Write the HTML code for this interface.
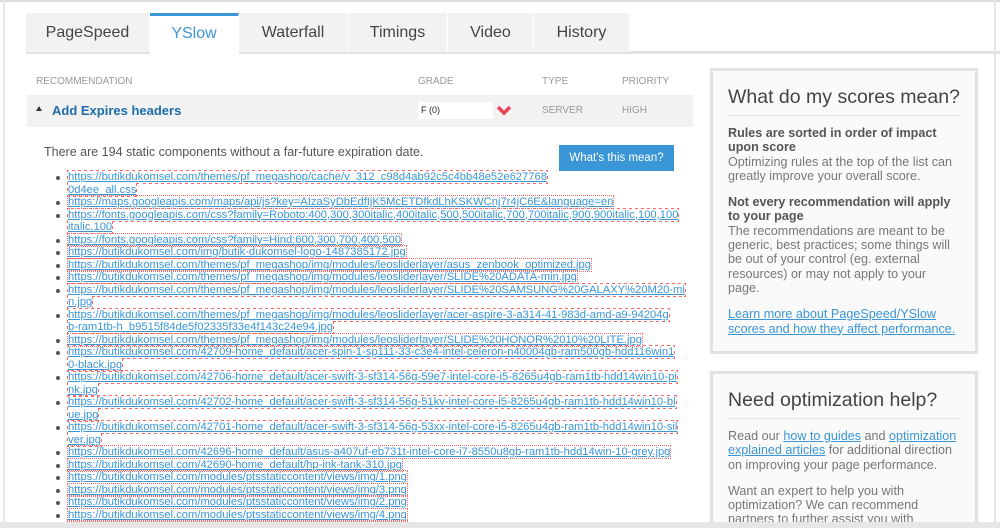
<!DOCTYPE html>
<html><head><meta charset="utf-8"><style>
*{margin:0;padding:0;box-sizing:border-box}
html,body{width:1000px;height:528px;overflow:hidden}
body{background:#fff;font-family:"Liberation Sans",Arial,sans-serif;position:relative}
.topline{position:absolute;left:0;top:0;width:1000px;height:2px;background:#ddd}
.lline{position:absolute;left:3px;top:0;width:2px;height:528px;background:#e6e6e6}
.rline{position:absolute;left:994px;top:0;width:2px;height:528px;background:#e6e6e6}
.bot{position:absolute;left:0;top:522px;width:1000px;height:6px;background:#e6e6e6;z-index:5}
.tabbar{position:absolute;left:26px;top:51px;width:974px;height:3px;background:#e3e3e3}
.tab{position:absolute;top:13px;height:39px;background:#f2f2f2;font-size:16px;color:#444;text-align:center;line-height:40px;border-right:1px solid #fff}
.tab.act{background:#fff;color:#3b96d8;border-top:3px solid #3b96d8;line-height:36px;height:42px;z-index:2}
.th{position:absolute;top:76px;font-size:10px;color:#999}
.row{position:absolute;left:27px;top:95px;width:666px;height:32px;background:#f2f2f2}
.title{position:absolute;left:52px;top:103px;font-size:13px;font-weight:bold;color:#1f6ca8}
.tri{position:absolute;left:36px;top:106px;width:0;height:0;border-left:3px solid transparent;border-right:3px solid transparent;border-bottom:5px solid #333}
.grade{position:absolute;left:418px;top:102px;width:75px;height:17px;background:#fff;font-size:9px;padding:3px 3px;color:#222}
.small{position:absolute;top:105px;font-size:10px;color:#999}
.desc{position:absolute;left:44px;top:145px;font-size:12.5px;color:#555}
.btn{position:absolute;left:559px;top:145px;width:115px;height:26px;background:#3b96d8;color:#fff;font-size:11.5px;text-align:center;line-height:26px}
ul{position:absolute;left:68px;top:171px;list-style:none;font-size:11.2px;line-height:12.5px}
li{position:relative;white-space:nowrap}
li:before{content:"";position:absolute;left:-12px;top:5px;width:4px;height:4px;border-radius:2px;background:#555}
a{color:#3b96d8;text-decoration:underline;outline:1px dotted #f66;outline-offset:0}
.panel{position:absolute;left:710px;width:268px;background:#fafafa;border:3px solid #e2e2e2;padding:14px 15px;font-size:12.6px;color:#777;line-height:14.3px}
.panel h2{font-weight:normal;font-size:19.5px;color:#444;padding-bottom:6px;border-bottom:1px solid #e4e4e4;margin-bottom:10px;line-height:24px;white-space:nowrap}
.panel b{color:#555}
.panel p{margin-bottom:12px}
.panel a{outline:none;color:#3b96d8}
</style></head><body>
<div class="topline"></div><div class="lline"></div><div class="rline"></div>
<div class="tabbar"></div>
<div class="tab" style="left:26px;width:124px">PageSpeed</div>
<div class="tab act" style="left:150px;width:89px">YSlow</div>
<div class="tab" style="left:239px;width:109px">Waterfall</div>
<div class="tab" style="left:348px;width:100px">Timings</div>
<div class="tab" style="left:448px;width:86px">Video</div>
<div class="tab" style="left:534px;width:96px">History</div>
<div class="th" style="left:36px">RECOMMENDATION</div>
<div class="th" style="left:418px">GRADE</div>
<div class="th" style="left:542px">TYPE</div>
<div class="th" style="left:622px">PRIORITY</div>
<div class="row"></div><div class="tri"></div>
<div class="title">Add Expires headers</div>
<div class="grade">F (0)</div>
<svg style="position:absolute;left:497px;top:105px" width="14" height="11" viewBox="0 0 14 11"><path d="M1 2 L7 8 L13 2" stroke="#e8435a" stroke-width="3.5" fill="none"/></svg>
<div class="small" style="left:542px">SERVER</div>
<div class="small" style="left:622px">HIGH</div>
<div class="desc">There are 194 static components without a far-future expiration date.</div>
<div class="btn">What's this mean?</div>
<ul>
<li><a>https://butikdukomsel.com/themes/pf_megashop/cache/v_312_c98d4ab92c5c4bb48e52e627768<br>0d4ee_all.css</a></li>
<li><a>https://maps.googleapis.com/maps/api/js?key=AIzaSyDbEdfIjK5McETDfkdLhKSKWCnj7r4jC6E&amp;language=en</a></li>
<li><a>https://fonts.googleapis.com/css?family=Roboto:400,300,300italic,400italic,500,500italic,700,700italic,900,900italic,100,100<br>italic,100</a></li>
<li><a>https://fonts.googleapis.com/css?family=Hind:600,300,700,400,500</a></li>
<li><a>https://butikdukomsel.com/img/butik-dukomsel-logo-1487385172.jpg</a></li>
<li><a>https://butikdukomsel.com/themes/pf_megashop/img/modules/leosliderlayer/asus_zenbook_optimized.jpg</a></li>
<li><a>https://butikdukomsel.com/themes/pf_megashop/img/modules/leosliderlayer/SLIDE%20ADATA-min.jpg</a></li>
<li><a>https://butikdukomsel.com/themes/pf_megashop/img/modules/leosliderlayer/SLIDE%20SAMSUNG%20GALAXY%20M20-mi<br>n.jpg</a></li>
<li><a>https://butikdukomsel.com/themes/pf_megashop/img/modules/leosliderlayer/acer-aspire-3-a314-41-983d-amd-a9-94204g<br>b-ram1tb-h_b9515f84de5f02335f33e4f143c24e94.jpg</a></li>
<li><a>https://butikdukomsel.com/themes/pf_megashop/img/modules/leosliderlayer/SLIDE%20HONOR%2010%20LITE.jpg</a></li>
<li><a>https://butikdukomsel.com/42709-home_default/acer-spin-1-sp111-33-c3e4-intel-celeron-n40004gb-ram500gb-hdd116win1<br>0-black.jpg</a></li>
<li><a>https://butikdukomsel.com/42706-home_default/acer-swift-3-sf314-56g-59e7-intel-core-i5-8265u4gb-ram1tb-hdd14win10-pi<br>nk.jpg</a></li>
<li><a>https://butikdukomsel.com/42702-home_default/acer-swift-3-sf314-56g-51kv-intel-core-i5-8265u4gb-ram1tb-hdd14win10-bl<br>ue.jpg</a></li>
<li><a>https://butikdukomsel.com/42701-home_default/acer-swift-3-sf314-56g-53xx-intel-core-i5-8265u4gb-ram1tb-hdd14win10-sil<br>ver.jpg</a></li>
<li><a>https://butikdukomsel.com/42696-home_default/asus-a407uf-eb731t-intel-core-i7-8550u8gb-ram1tb-hdd14win-10-grey.jpg</a></li>
<li><a>https://butikdukomsel.com/42690-home_default/hp-ink-tank-310.jpg</a></li>
<li><a>https://butikdukomsel.com/modules/ptsstaticcontent/views/img/1.png</a></li>
<li><a>https://butikdukomsel.com/modules/ptsstaticcontent/views/img/3.png</a></li>
<li><a>https://butikdukomsel.com/modules/ptsstaticcontent/views/img/2.png</a></li>
<li><a>https://butikdukomsel.com/modules/ptsstaticcontent/views/img/4.png</a></li>
<li><a>https://butikdukomsel.com/modules/ptsstaticcontent/views/img/5.png</a></li>
</ul>
<div class="panel" style="top:68px;height:286px">
<h2>What do my scores mean?</h2>
<p><b>Rules are sorted in order of impact upon score</b><br>Optimizing rules at the top of the list can greatly improve your overall score.</p>
<p><b>Not every recommendation will apply to your page</b><br>The recommendations are meant to be generic, best practices; some things will be out of your control (eg. external resources) or may not apply to your page.</p>
<p><a>Learn more about PageSpeed/YSlow scores and how they affect performance.</a></p>
</div>
<div class="panel" style="top:371px;height:170px">
<h2>Need optimization help?</h2>
<p>Read our <a>how to guides</a> and <a>optimization explained articles</a> for additional direction on improving your page performance.</p>
<p>Want an expert to help you with optimization? We can recommend partners to further assist you with</p>
</div>
<div class="bot"></div>
</body></html>
